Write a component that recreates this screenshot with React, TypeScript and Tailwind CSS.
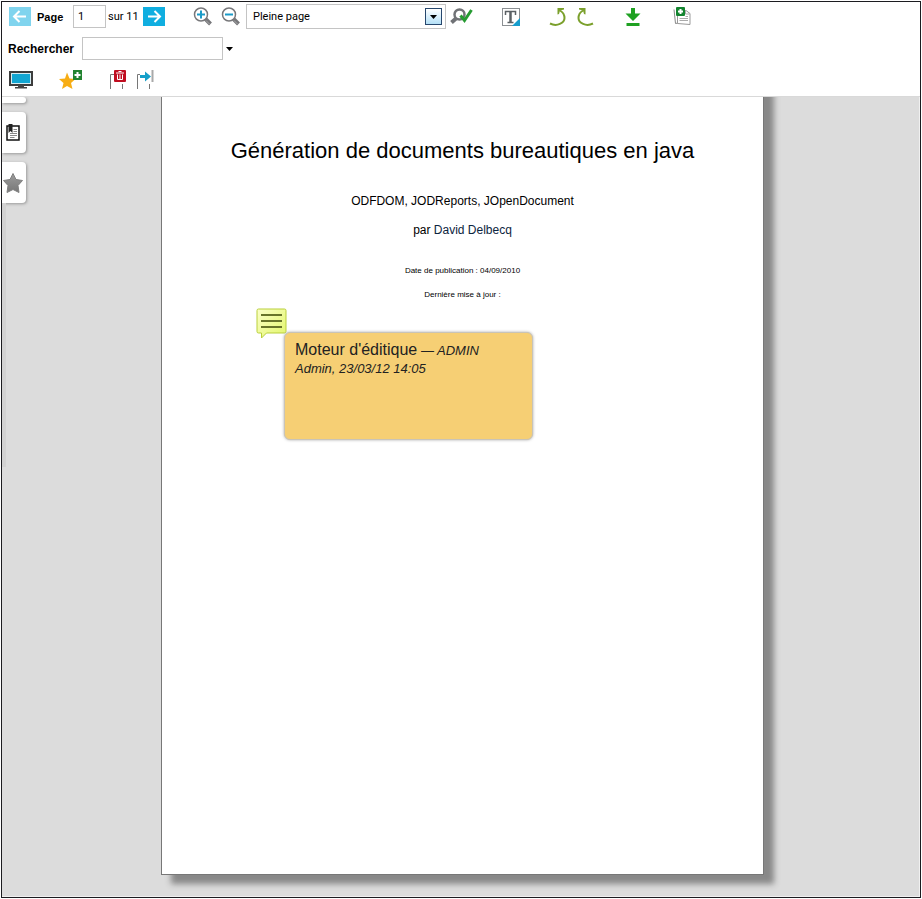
import type { ReactNode } from "react";

function IconButton({ label, className = "", children }: { label: string; className?: string; children: ReactNode }) {
  return (
    <button type="button" aria-label={label} title={label} className={`flex shrink-0 items-center justify-center ${className}`}>
      {children}
    </button>
  );
}

function Arrow({ back = false }: { back?: boolean }) {
  return (
    <svg width="22" height="19" viewBox="0 0 22 19" fill="none" stroke="#fff" strokeWidth="2">
      <path d={back ? "M17 9.500H5.500M10.500 4L5 9.500L10.500 15" : "M5 9.500H16.500M11.500 4L17 9.500L11.500 15"} />
    </svg>
  );
}

function Magnifier({ plus = false }: { plus?: boolean }) {
  return (
    <svg width="20" height="20" viewBox="0 0 20 20" fill="none">
      <path d="M12.500 12L17.500 17" stroke="#77777a" strokeWidth="4" />
      <path d="M13 13.500L16.500 17" stroke="#aaa" strokeWidth="1" />
      <circle cx="8" cy="7.500" r="6.500" fill="#fff" stroke="#77777a" strokeWidth="1.500" />
      <path d={plus ? "M4 7.500H12M8 3.500V11.500" : "M4 7.500H12"} stroke="#1b9bc8" strokeWidth="2" />
    </svg>
  );
}

function SearchCheck() {
  return (
    <svg width="24" height="18" viewBox="0 0 24 18" fill="none">
      <path d="M1.500 14.500L6 10.500" stroke="#707276" strokeWidth="4" />
      <circle cx="9.500" cy="6.500" r="5" fill="#fff" stroke="#707276" strokeWidth="2.500" />
      <path d="M10.500 7.500L14.500 12.500L21.500 2" stroke="#269b32" strokeWidth="3" />
    </svg>
  );
}

function TextSelect() {
  return (
    <svg width="18" height="18" viewBox="0 0 18 18">
      <rect x=".5" y=".5" width="17" height="17" fill="#fff" stroke="#8b8f93" />
      <path d="M18 10V18H10Z" fill="#169ccc" />
      <path d="M3.500 7V3.500H13.500V7M5.500 14.500H11.500" fill="none" stroke="#5b6064" strokeWidth="1.500" />
      <path d="M8.500 4V14" stroke="#5b6064" strokeWidth="2.500" />
    </svg>
  );
}

function Rotate({ right = false }: { right?: boolean }) {
  return (
    <svg width="17" height="20" viewBox="0 0 17 20" fill="none" stroke="#7ba02c">
      {right ? (
        <>
          <path d="M16 16.500C9 20 1.500 16 1.500 11C1.500 8 3.500 5 6 3.500" strokeWidth="2" />
          <path d="M2 1H8.500V7.500L7 7L6 3.500L2 2.500Z" fill="#7ba02c" stroke="none" />
        </>
      ) : (
        <>
          <path d="M1 16.500C8 20 15.500 16 15.500 11C15.500 8 13.500 5 11 3.500" strokeWidth="2" />
          <path d="M15 1H8.500V7.500L10 7L11 3.500L15 2.500Z" fill="#7ba02c" stroke="none" />
        </>
      )}
    </svg>
  );
}

function Download() {
  return (
    <svg width="16" height="18" viewBox="0 0 16 18" fill="#1fa122">
      <path d="M6 0H10V5.500H15.500L8 13L.5 5.500H6ZM1.500 15H14.500V18H1.500Z" />
    </svg>
  );
}

function AddPages() {
  return (
    <svg width="18" height="19" viewBox="0 0 18 19" fill="none">
      <path d="M1 2.500L2.500 16.500L5 16" stroke="#888" />
      <path d="M4.500 3.500H13L17 6.500V17.500L4.500 16.500Z" fill="#fff" stroke="#999" />
      <path d="M12.500 3.500V7H16.500M6.500 11.500H15M6.500 13.500H15M12.500 9.500H15" stroke="#aaa" />
      <rect x="3" y="0" width="9" height="9" rx="1" fill="#13842f" />
      <path d="M5 4.500H10M7.500 2V7" stroke="#fff" strokeWidth="2" />
    </svg>
  );
}

function Monitor() {
  return (
    <svg width="24" height="18" viewBox="0 0 24 18">
      <rect x="1" y="1" width="22" height="13" fill="#13a6d2" stroke="#3d3d3d" strokeWidth="2" />
      <rect x="2.500" y="2.500" width="19" height="10" fill="none" stroke="#d7edf3" />
      <path d="M9 14H15V16H18V17.500H6V16H9Z" fill="#444" />
    </svg>
  );
}

function StarPlus() {
  return (
    <svg width="24" height="20" viewBox="0 0 24 20">
      <path d="M8 2.500L10.500 8.500L16.500 9L12 13L13.500 19L8 16L3 19L4.500 13L0 9L6 8.500Z" fill="#f7ad14" />
      <rect x="14" y="0" width="9" height="10" fill="#228330" />
      <path d="M15.500 5H21.500M18.500 2V8" stroke="#fff" strokeWidth="2" />
    </svg>
  );
}

function DeletePage() {
  return (
    <svg width="18" height="20" viewBox="0 0 18 20" fill="none">
      <path d="M1.500 19V4.500H5M13.500 14V19" stroke="#777" />
      <rect x="5" y="0" width="12" height="12" rx="1" fill="#c00d20" />
      <path d="M7 3H15M9.500 1.500H12.500M8.500 4.500V9.500H13.500V4.500M11 4.500V9.500" stroke="#fff" />
    </svg>
  );
}

function MovePage() {
  return (
    <svg width="18" height="20" viewBox="0 0 18 20" fill="none">
      <path d="M1.500 19V4.500H4M13.500 14V19" stroke="#777" />
      <path d="M16.500 0V12" stroke="#a9a9a9" strokeWidth="2" />
      <path d="M4 5H9V1.500L15 6.500L9 11.500V8H4Z" fill="#169fc9" />
    </svg>
  );
}

function BookmarkPage() {
  return (
    <svg width="14" height="17" viewBox="0 0 14 17" fill="none">
      <rect x="1" y="2" width="12" height="14" fill="#fff" stroke="#111" strokeWidth="1.500" />
      <path d="M2.500 0H6.500V9L4.500 7L2.500 9Z" fill="#222" />
      <path d="M7.500 5.500H11M7.500 7.500H11M4 9.500H11M4 11.500H11M4 13.500H8.500" stroke="#888" />
    </svg>
  );
}

function Star() {
  return (
    <svg width="22" height="22" viewBox="0 0 22 22">
      <defs>
        <linearGradient id="star-fill" x1="0" y1="0" x2="0" y2="1">
          <stop offset="0" stopColor="#9c9c9c" />
          <stop offset="1" stopColor="#777" />
        </linearGradient>
      </defs>
      <path d="M11 1.500L14 7.500L20.500 8.500L16 13.500L17 20.500L11 17.500L5 20.500L6 13.500L1.500 8.500L8 7.500Z" fill="url(#star-fill)" stroke="#808080" strokeLinejoin="round" />
    </svg>
  );
}

function Comment() {
  return (
    <svg width="31" height="31" viewBox="0 0 31 31">
      <defs>
        <linearGradient id="comment-fill" x1="0" y1="0" x2="1" y2="1">
          <stop offset="0" stopColor="#fbffc8" />
          <stop offset="1" stopColor="#e2f66a" />
        </linearGradient>
      </defs>
      <path d="M2.500 1H28.500Q30 1 30 2.500V23.500Q30 25 28.500 25H10.500L5.500 30V25H2.500Q1 25 1 23.500V2.500Q1 1 2.500 1Z" fill="url(#comment-fill)" stroke="#b9cf3a" />
      <path d="M5 7H26M5 13H26M5 19H26" stroke="#68742a" strokeWidth="2" />
    </svg>
  );
}

const tab = "flex w-full shrink-0 items-center justify-center rounded-r-sm bg-white pr-[2px] shadow-[1px_1px_3px_#999]";

function Toolbar() {
  return (
    <header className="shrink-0 border-b border-[#d9d9d9] bg-white font-[Roboto,sans-serif] text-[11px] leading-4">
      <div className="flex h-[29px] items-center pl-[7px]">
        <IconButton label="Page précédente" className="bg-[#80d4ee]"><Arrow back /></IconButton>
        <label htmlFor="page" className="ml-[6px] w-9 font-['Liberation_Sans',sans-serif] font-bold">Page</label>
        <input id="page" defaultValue="1" className="h-[23px] w-[33px] border border-[#c4c4c4] px-1" />
        <span className="ml-[2px] w-[35px] whitespace-nowrap">sur 11</span>
        <IconButton label="Page suivante" className="bg-[#10aee0]"><Arrow /></IconButton>
        <IconButton label="Zoom avant" className="ml-7"><Magnifier plus /></IconButton>
        <IconButton label="Zoom arrière" className="ml-2"><Magnifier /></IconButton>
        <div className="relative ml-[5px] h-[25px] w-[200px]">
          <select aria-label="Zoom" className="h-full w-full appearance-none border border-[#c4c4c4] bg-white px-[6px]">
            <option>Pleine page</option>
          </select>
          <span className="pointer-events-none absolute top-1 right-1 flex size-[17px] items-center justify-center border border-[#27476d] bg-linear-to-b from-white to-[#b4e0f7]">
            <svg width="7" height="4" viewBox="0 0 7 4"><path d="M0 0H7L3.500 4Z" /></svg>
          </span>
        </div>
        <IconButton label="Zoom sur la sélection" className="ml-1"><SearchCheck /></IconButton>
        <IconButton label="Sélection de texte" className="ml-7"><TextSelect /></IconButton>
        <IconButton label="Rotation à gauche" className="ml-[29px]"><Rotate /></IconButton>
        <IconButton label="Rotation à droite" className="ml-[11px]"><Rotate right /></IconButton>
        <IconButton label="Télécharger" className="ml-[31px]"><Download /></IconButton>
        <IconButton label="Ajouter des pages" className="ml-8"><AddPages /></IconButton>
      </div>
      <div className="flex h-[35px] items-center pl-[6px]">
        <label htmlFor="search" className="w-[74px] font-['Liberation_Sans',sans-serif] text-[12px] font-bold">Rechercher</label>
        <input id="search" className="h-[23px] w-[141px] border border-[#c4c4c4] px-1" />
        <IconButton label="Options de recherche" className="ml-[3px]">
          <svg width="7" height="4" viewBox="0 0 7 4"><path d="M0 0H7L3.500 4Z" /></svg>
        </IconButton>
      </div>
      <div className="flex h-[30px] items-center pb-[2px] pl-[7px]">
        <IconButton label="Plein écran"><Monitor /></IconButton>
        <IconButton label="Ajouter un signet" className="ml-[26px]"><StarPlus /></IconButton>
        <IconButton label="Supprimer la page" className="ml-[26px]"><DeletePage /></IconButton>
        <IconButton label="Déplacer la page" className="ml-[9px]"><MovePage /></IconButton>
      </div>
    </header>
  );
}

export default function App() {
  return (
    <div className="h-screen bg-white p-px font-['Liberation_Sans',Arial,sans-serif] text-black">
      <div className="flex h-full flex-col border border-[#1c1c20]">
        <Toolbar />
        <div className="flex min-h-0 flex-1 overflow-hidden border-r border-b border-[#f0f0f0] bg-[#dcdcdc]">
          <nav aria-label="Panneaux" className="flex w-6 shrink-0 flex-col gap-[9px]">
            <button type="button" aria-label="Vignettes" className={`${tab} h-[6px]`} />
            <button type="button" aria-label="Signets" className={`${tab} h-[41px]`}><BookmarkPage /></button>
            <button type="button" aria-label="Favoris" className={`${tab} h-[41px]`}><Star /></button>
            <div className="-mt-[9px] h-[264px] w-1 bg-[#d2d2d2]" />
          </nav>
          <main className="flex min-w-0 flex-1 justify-center pr-5 pb-[21px]">
            <article className="relative -mt-5 w-[603px] border border-[#777] bg-white pt-[59px] text-center shadow-[10px_9px_6px_#888]">
              <h1 className="text-[22px] leading-7">Génération de documents bureautiques en java</h1>
              <p className="mt-7 text-[12px] leading-4">ODFDOM, JODReports, JOpenDocument</p>
              <p className="mt-[13px] text-[12px] leading-4">par <a href="#auteur" className="text-[#0c2440]">David Delbecq</a></p>
              <p className="mt-[27px] text-[8px] leading-3">Date de publication : 04/09/2010</p>
              <p className="mt-3 text-[8px] leading-3">Dernière mise à jour :</p>
              <button type="button" aria-label="Commentaire" className="absolute top-[230px] left-[94px]"><Comment /></button>
              <aside className="absolute top-[254px] left-[122px] h-[108px] w-[249px] rounded-md border border-[#c9c4b8] bg-[#f6cf74] px-[10px] py-2 text-left text-[13px] leading-[18px] text-[#222] shadow-[0_0_3px_#aaa]">
                <p><span className="text-[16px]">Moteur d'éditique</span> <em>— ADMIN</em></p>
                <p><em>Admin, 23/03/12 14:05</em></p>
              </aside>
            </article>
          </main>
        </div>
      </div>
    </div>
  );
}
